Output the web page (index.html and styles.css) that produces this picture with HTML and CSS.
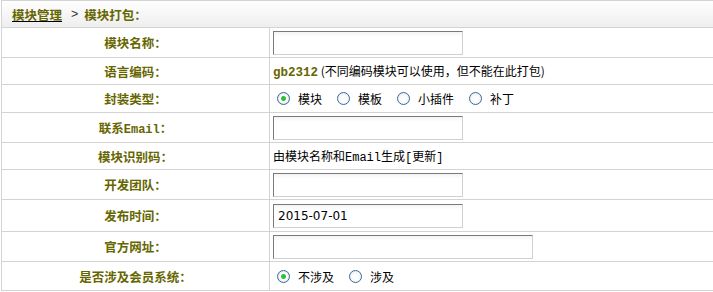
FILE: index.html
```html
<!DOCTYPE html>
<html lang="zh-CN">
<head>
<meta charset="utf-8">
<title>模块打包</title>
<link rel="stylesheet" href="styles.css">
</head>
<body>
<div class="panel">
  <div class="crumb">
    <a class="crumb-link" href="#">模块管理</a>
    <span class="crumb-sep">&gt;</span>
    <span class="crumb-cur">模块打包：</span>
  </div>
  <div class="form">
    <div class="label h-input">模块名称：</div>
    <div class="field h-input"><input class="txt" type="text"></div>

    <div class="label h-text">语言编码：</div>
    <div class="field h-text"><span><b class="code">gb2312</b>&nbsp;(不同编码模块可以使用，但不能在此打包)</span></div>

    <div class="label h-radio">封装类型：</div>
    <div class="field h-radio">
      <label class="opt"><input class="rd" type="radio" name="t" checked>模块</label>
      <label class="opt"><input class="rd" type="radio" name="t">模板</label>
      <label class="opt"><input class="rd" type="radio" name="t">小插件</label>
      <label class="opt"><input class="rd" type="radio" name="t">补丁</label>
    </div>

    <div class="label h-input"><span>联系<span class="mono">Email</span>：</span></div>
    <div class="field h-input"><input class="txt" type="text"></div>

    <div class="label h-text">模块识别码：</div>
    <div class="field h-text"><span>由模块名称和<span class="mono">Email</span>生成<span class="mono">[</span>更新<span class="mono">]</span></span></div>

    <div class="label h-input">开发团队：</div>
    <div class="field h-input"><input class="txt" type="text"></div>

    <div class="label h-date">发布时间：</div>
    <div class="field h-date"><input class="txt" type="text" value="2015-07-01"></div>

    <div class="label h-input">官方网址：</div>
    <div class="field h-input"><input class="txt wide" type="text"></div>

    <div class="label h-radio2">是否涉及会员系统：</div>
    <div class="field h-radio2">
      <label class="opt"><input class="rd" type="radio" name="m" checked>不涉及</label>
      <label class="opt"><input class="rd" type="radio" name="m">涉及</label>
    </div>
  </div>
</div>
</body>
</html>
```

FILE: styles.css
```css
html, body {
  margin: 0;
  padding: 0;
  background: #fff;
}
body {
  font-family: "Noto Sans CJK SC", "Liberation Sans", sans-serif;
  font-size: 12px;
  color: #000;
}
.panel {
  margin-left: 1px;
  width: 740px;
  border-top: 1px solid #d3d3d3;
  border-left: 1px solid #d3d3d3;
}
.crumb {
  height: 26px;
  display: flex;
  align-items: center;
  padding-left: 10px;
  background: linear-gradient(#ffffff, #eeeeee);
  border-bottom: 1px solid #d3d3d3;
  font-weight: bold;
  font-size: 12.5px;
  color: #666600;
}
.crumb-link {
  color: #666600;
  text-decoration: underline;
  text-decoration-color: #000;
}
.crumb-sep {
  color: #333;
  font-weight: normal;
  font-family: "Liberation Sans", sans-serif;
  margin: 0 6px 0 9px;
}
.form {
  display: grid;
  grid-template-columns: 268px 1fr;
}
.label, .field {
  display: flex;
  align-items: center;
  border-bottom: 1px solid #d3d3d3;
}
.label {
  justify-content: center;
  border-right: 1px solid #d3d3d3;
  font-weight: bold;
  font-size: 12.5px;
  color: #666600;
}
.field {
  padding-left: 3px;
}
.h-input { height: 29px; }
.h-text { height: 26px; }
.h-radio { height: 27px; }
.h-date { height: 31px; }
.h-radio2 { height: 28px; }
.mono {
  font-family: "Liberation Mono", monospace;
  font-size: 12px;
}
.code {
  font-family: "Liberation Mono", monospace;
  color: #666600;
  font-size: 12.5px;
}
.txt {
  box-sizing: border-box;
  width: 190px;
  height: 24px;
  margin: 0;
  padding: 0 4px;
  border-style: solid;
  border-width: 1px;
  border-color: #7a7a7a #d0d0d0 #d0d0d0 #7a7a7a;
  background: linear-gradient(#f4f4f4, #ffffff 5px);
  font-family: "DejaVu Sans", "Liberation Sans", sans-serif;
  font-size: 12px;
  color: #000;
  outline: none;
}
.wide {
  width: 260px;
}
.opt {
  display: inline-flex;
  align-items: center;
  margin-right: 11px;
}
.rd {
  appearance: none;
  -webkit-appearance: none;
  box-sizing: border-box;
  width: 13px;
  height: 13px;
  margin: 0 8px 0 4px;
  border-radius: 50%;
  border: 1px solid #3e6a95;
  background: radial-gradient(circle at 50% 55%, #ffffff 30%, #dfe4ea 100%);
}
.rd:checked {
  background: radial-gradient(circle, #2fbf3a 0, #2fbf3a 2px, #ffffff 3px, #ffffff 3.5px, #d9dfe6 6px);
}
```
